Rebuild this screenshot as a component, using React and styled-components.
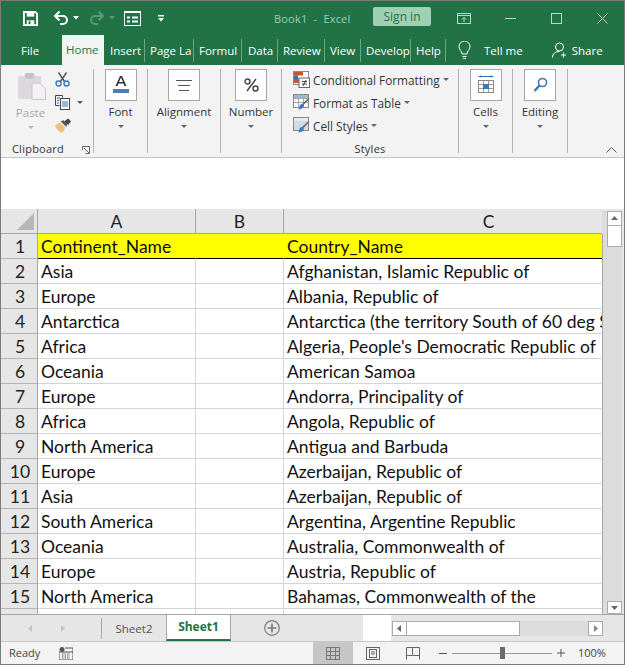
import React from "react";
import styled, { createGlobalStyle } from "styled-components";

const GlobalStyle = createGlobalStyle`
  html, body { margin: 0; padding: 0; background: #fff; }
  * { box-sizing: border-box; }
`;

const UI_FONT = `"Open Sans", "Noto Sans", "Liberation Sans", sans-serif`;
const CELL_FONT = `Lato, "Noto Sans", "Liberation Sans", sans-serif`;

const Window = styled.div`
  width: 625px;
  height: 665px;
  border: 1px solid #7b7b7b;
  overflow: hidden;
  display: flex;
  flex-direction: column;
  font-family: ${UI_FONT};
  background: #fff;
`;

/* title bar */
const TitleBar = styled.div`
  height: 34px;
  flex: none;
  background: #217346;
  display: flex;
  align-items: center;
  padding-left: 22px;
`;

const TitleIcon = styled.svg`
  flex: none;
  display: block;
  margin-left: ${(p) => p.$ml || 0}px;
`;

const BookTitle = styled.div`
  margin-left: 110px;
  width: 99px;
  font-size: 11px;
  letter-spacing: 0.2px;
  color: #9fcdb3;
  white-space: nowrap;
`;

const SignIn = styled.div`
  width: 58px;
  height: 19px;
  margin-bottom: 3px;
  background: #a0d0b4;
  border-radius: 2px;
  color: #217346;
  font-size: 12px;
  line-height: 19px;
  text-align: center;
`;

/* tabs */
const TabRow = styled.div`
  height: 30px;
  flex: none;
  background: #217346;
  display: flex;
  align-items: center;
  color: #fff;
  font-size: 11.5px;
`;

const Tab = styled.div`
  flex: none;
  width: ${(p) => p.$w}px;
  height: ${(p) => (p.$active ? 30 : 23)}px;
  line-height: ${(p) => (p.$active ? 30 : 23)}px;
  padding-left: ${(p) => p.$pad ?? 5}px;
  background: ${(p) => (p.$active ? "#f3f3f3" : "transparent")};
  color: ${(p) => (p.$active ? "#217346" : "#fff")};
  border-right: ${(p) => (p.$sep ? "1px solid #6ba585" : "none")};
  white-space: nowrap;
`;

const TabExtra = styled.div`
  display: flex;
  align-items: center;
  gap: ${(p) => p.$gap}px;
  margin-left: ${(p) => p.$ml}px;
  white-space: nowrap;
`;

/* ribbon */
const Ribbon = styled.div`
  height: 93px;
  flex: none;
  background: #f3f3f3;
  border-bottom: 1px solid #c6c6c6;
  display: flex;
  align-items: flex-start;
  padding-top: 4px;
  position: relative;
  font-size: 11.5px;
  color: #333;
`;

const Group = styled.div`
  flex: none;
  width: ${(p) => p.$w}px;
  height: 84px;
  border-right: 1px solid #b4b4b4;
  display: flex;
  flex-direction: column;
  align-items: center;
  position: relative;
`;

const BigBox = styled.div`
  width: 32px;
  height: 32px;
  flex: none;
  background: #fff;
  border: 1px solid #a6a6a6;
  display: flex;
  align-items: center;
  justify-content: center;
`;

const BigLabel = styled.div`
  margin-top: 2px;
  line-height: 17px;
  white-space: nowrap;
`;

const Caret = styled.div`
  width: 0;
  height: 0;
  border-left: 3px solid transparent;
  border-right: 3px solid transparent;
  border-top: 3px solid ${(p) => p.$color || "#666"};
  margin-top: ${(p) => p.$mt ?? 5}px;
  margin-left: ${(p) => p.$ml || 0}px;
  flex: none;
`;

const ClipboardBody = styled.div`
  display: flex;
  width: 100%;
  padding: 3px 0 0 17px;
  height: 70px;
`;

const PasteCol = styled.div`
  width: 25px;
  display: flex;
  flex-direction: column;
  align-items: center;
  color: #a8a8a8;
  svg { align-self: flex-start; margin-top: 1px; flex: none; }
`;

const PasteLabel = styled.div`
  margin-top: 4px;
  line-height: 17px;
`;

const ToolCol = styled.div`
  margin-left: 12px;
  display: flex;
  flex-direction: column;
  gap: 8px;
`;

const ToolRow = styled.div`
  display: flex;
  align-items: center;
  gap: 6px;
`;

const GroupLabel = styled.div`
  position: absolute;
  left: 0;
  right: ${(p) => p.$right || 0}px;
  bottom: -4px;
  height: 16px;
  line-height: 16px;
  font-size: 11px;
  letter-spacing: 0.25px;
  text-align: center;
`;

const Launcher = styled.svg`
  position: absolute;
  right: 3px;
  bottom: -1px;
`;

const StyleList = styled.div`
  display: flex;
  flex-direction: column;
  width: 100%;
  padding-left: 11px;
  margin-top: -1px;
`;

const StyleRow = styled.div`
  display: flex;
  align-items: center;
  height: 23px;
  white-space: nowrap;
  font-size: 11.8px;
  gap: 3px;
`;

const Collapse = styled.svg`
  position: absolute;
  right: 7px;
  bottom: 4px;
`;

const FormulaArea = styled.div`
  height: 51px;
  flex: none;
  background: #fff;
`;

/* sheet */
const SheetArea = styled.div`
  height: 405px;
  flex: none;
  display: flex;
  overflow: hidden;
  background: #e6e6e6;
`;

const Table = styled.div`
  width: 601px;
  flex: none;
  height: 405px;
  overflow: hidden;
  display: grid;
  grid-template-columns: 37px 158px 88px 410px;
  grid-auto-rows: 25px;
  font-family: ${CELL_FONT};
  font-size: 17.5px;
  color: #111;
`;

const Corner = styled.div`
  background: #e6e6e6;
  border-right: 1px solid #a6a6a6;
  border-bottom: 1px solid #a6a6a6;
  display: flex;
  align-items: flex-end;
  justify-content: flex-end;
  padding: 0 3px 3px 0;
`;

const ColHead = styled.div`
  background: #e6e6e6;
  border-right: 1px solid #a6a6a6;
  border-bottom: 1px solid #a6a6a6;
  text-align: center;
  line-height: 25px;
  color: #222;
`;

const RowHead = styled.div`
  background: #e6e6e6;
  border-right: 1px solid #a6a6a6;
  border-bottom: 1px solid #b4b4b4;
  text-align: center;
  padding-left: 2px;
  line-height: 26px;
  color: #222;
`;

const Cell = styled.div`
  padding-left: 3px;
  line-height: 26px;
  white-space: nowrap;
  overflow: hidden;
  background: ${(p) => (p.$head ? "#ffff00" : "#fff")};
  border-bottom: 1px solid ${(p) => (p.$head ? "#000" : "#d4d4d4")};
  border-right: 1px solid ${(p) => (p.$head ? "#ffff00" : "#d4d4d4")};
`;

const VScroll = styled.div`
  flex: 1;
  display: flex;
  flex-direction: column;
  align-items: center;
  padding: 2px 0 0 2px;
  position: relative;
  background:
    linear-gradient(#e6e6e6, #e6e6e6) top / 100% 2px no-repeat,
    linear-gradient(#e6e6e6, #e6e6e6) right / 2px 100% no-repeat,
    #dcdcdc;
  &::before {
    content: "";
    position: absolute;
    left: 0;
    top: 25px;
    bottom: 0;
    width: 1px;
    background: #a6a6a6;
  }
`;

const ScrollBtn = styled.div`
  width: 15px;
  height: ${(p) => p.$h || 15}px;
  flex: none;
  background: #fff;
  border: 1px solid #ababab;
  display: flex;
  align-items: center;
  justify-content: center;
  margin-top: ${(p) => (p.$push ? "auto" : "0")};
`;

const VThumb = styled.div`
  width: 15px;
  height: 21px;
  background: #fff;
  border: 1px solid #ababab;
  border-top: none;
`;

/* sheet tabs */
const TabBar = styled.div`
  height: 28px;
  flex: none;
  background: #e6e6e6;
  border-top: 1px solid #a6a6a6;
  border-bottom: 1px solid #c6c6c6;
  display: flex;
  font-size: 11.5px;
`;

const NavBox = styled.div`
  width: 100px;
  height: 100%;
  display: flex;
  align-items: center;
  gap: 23px;
  padding-left: 25px;
`;

const SheetTab = styled.div`
  flex: none;
  width: ${(p) => p.$w}px;
  text-align: center;
  border-left: 1px solid #a6a6a6;
  ${(p) =>
    p.$active
      ? `
    height: 100%;
    line-height: 24px;
    background: #fff;
    color: #217346;
    font-weight: 700;
    font-size: 12px;
    border-right: 1px solid #a6a6a6;
    border-bottom: 2px solid #217346;
  `
      : `
    height: 21px;
    margin-top: 3px;
    line-height: 22px;
    color: #555;
  `}
`;

const AddSheet = styled.div`
  width: 132px;
  display: flex;
  align-items: center;
  padding-left: 33px;
`;

const WhiteGap = styled.div`
  width: 28px;
  background: #fff;
`;

const HScroll = styled.div`
  flex: none;
  width: 211px;
  height: 15px;
  margin: 6px 0 0 1px;
  display: flex;
  background: #dcdcdc;
`;

const HBtn = styled.div`
  width: 15px;
  height: 15px;
  flex: none;
  background: #fff;
  border: 1px solid #ababab;
  display: flex;
  align-items: center;
  justify-content: center;
  margin-left: ${(p) => (p.$push ? "auto" : "0")};
`;

const HThumb = styled.div`
  width: 113px;
  height: 15px;
  background: #fff;
  border: 1px solid #ababab;
  border-left: none;
`;

/* status bar */
const StatusBar = styled.div`
  flex: 1;
  background: #f3f3f3;
  display: flex;
  align-items: center;
  font-size: 11px;
  color: #444;
`;

const Ready = styled.div`
  width: 58px;
  padding-left: 8px;
  margin-top: -1px;
`;

const ViewBtn = styled.div`
  flex: none;
  width: ${(p) => p.$w}px;
  height: 100%;
  margin-left: ${(p) => p.$ml || 0}px;
  background: ${(p) => (p.$on ? "#c6c6c6" : "transparent")};
  display: flex;
  align-items: center;
  justify-content: center;
`;

const Slider = styled.div`
  flex: none;
  width: 100px;
  height: 1px;
  margin-left: 5px;
  background: #9a9a9a;
  position: relative;
`;

const SliderThumb = styled.div`
  position: absolute;
  left: 48px;
  top: -6px;
  width: 5px;
  height: 12px;
  background: #6a6a6a;
`;

const Zoom = styled.div`
  margin-left: 13px;
  margin-top: -1px;
`;

const ROWS = [
  ["Continent_Name", "Country_Name"],
  ["Asia", "Afghanistan, Islamic Republic of"],
  ["Europe", "Albania, Republic of"],
  ["Antarctica", "Antarctica (the territory South of 60 deg S)"],
  ["Africa", "Algeria, People's Democratic Republic of"],
  ["Oceania", "American Samoa"],
  ["Europe", "Andorra, Principality of"],
  ["Africa", "Angola, Republic of"],
  ["North America", "Antigua and Barbuda"],
  ["Europe", "Azerbaijan, Republic of"],
  ["Asia", "Azerbaijan, Republic of"],
  ["South America", "Argentina, Argentine Republic"],
  ["Oceania", "Australia, Commonwealth of"],
  ["Europe", "Austria, Republic of"],
  ["North America", "Bahamas, Commonwealth of the"],
  ["", ""],
];

const TABS = [
  { name: "File", w: 61, pad: 20 },
  { name: "Home", w: 42, pad: 4, active: true },
  { name: "Insert", w: 41, pad: 6, sep: true },
  { name: "Page La", w: 49, sep: true },
  { name: "Formul", w: 48, sep: true },
  { name: "Data", w: 36, pad: 6, sep: true },
  { name: "Review", w: 47, sep: true },
  { name: "View", w: 36, sep: true },
  { name: "Develop", w: 50, sep: true },
  { name: "Help", w: 35, sep: true },
];

const Arrow = ({ dir, color = "#666" }) => {
  const pts = {
    up: "1,6 4.5,2 8,6",
    down: "1,3 4.5,7 8,3",
    left: "6,1 2,4.5 6,8",
    right: "3,1 7,4.5 3,8",
  };
  return (
    <svg width="9" height="9" viewBox="0 0 9 9">
      <polygon points={pts[dir]} fill={color} />
    </svg>
  );
};

const CondIcon = () => (
  <svg width="17" height="17" viewBox="0 0 17 17">
    <rect x="0.5" y="0.5" width="15" height="13" fill="#fff" stroke="#8a8a8a" />
    <rect x="1" y="1" width="9" height="3.5" fill="#d2502b" />
    <rect x="1" y="8" width="6" height="4" fill="#d2502b" />
    <rect x="1" y="4.5" width="4" height="3.5" fill="#2f6fb5" />
    <rect x="6" y="7" width="10.5" height="9.5" fill="#fff" stroke="#666" />
    <path d="M9 10.5h5M9 13h5M10 15l3-6" stroke="#333" strokeWidth="0.9" fill="none" />
  </svg>
);

const TableIcon = ({ shaded }) => (
  <svg width="17" height="17" viewBox="0 0 17 17">
    <rect x="0.5" y="0.5" width="15" height="13" fill={shaded ? "#cfdbe8" : "#fff"} stroke="#8a8a8a" />
    {!shaded && (
      <path d="M0.5 4.5h15M0.5 8.5h15M5.5 .5v13M10.5 .5v13" stroke="#9aa7b5" strokeWidth="1" />
    )}
    <rect x="1" y="1" width="14" height="3" fill={shaded ? "#e8e8e8" : "#a8b4c2"} />
    <path d="M15.5 4l1 1-6 6-1.500-1z" fill="#666" />
    <path d="M9.500 10c1.500.5 1.500 1.500 1 3-1 1.500-3 2.500-5.500 2.500 1.500-1 1-3 2-4.500.500-.7 1.500-1 2.500-1z" fill="#3a78b8" />
  </svg>
);

export default function App() {
  return (
    <Window>
      <GlobalStyle />
      <TitleBar>
        <TitleIcon width="15" height="15" viewBox="0 0 16 16" fill="none">
          <path d="M1 1h12l2 2v12H1z" stroke="#fff" strokeWidth="2" />
          <rect x="4" y="1" width="8" height="5" fill="#fff" />
          <rect x="4" y="10" width="8" height="5" fill="#fff" />
          <rect x="6" y="11" width="2" height="3" fill="#217346" />
        </TitleIcon>
        <TitleIcon $ml={15} width="16" height="16" viewBox="0 0 16 16" fill="none">
          <path d="M3 6h7a4 4 0 0 1 0 8H7" stroke="#fff" strokeWidth="2" />
          <path d="M6.500 1.500L2 6l4.500 4.500" stroke="#fff" strokeWidth="2" />
        </TitleIcon>
        <TitleIcon $ml={4} width="6" height="4" viewBox="0 0 6 4">
          <polygon points="0,0 6,0 3,3.500" fill="#fff" />
        </TitleIcon>
        <TitleIcon $ml={10} width="16" height="16" viewBox="0 0 16 16" fill="none">
          <path d="M13 6H6a4 4 0 0 0 0 8h3" stroke="#5d9a78" strokeWidth="2" />
          <path d="M9.500 1.500L14 6l-4.500 4.500" stroke="#5d9a78" strokeWidth="2" />
        </TitleIcon>
        <TitleIcon $ml={4} width="6" height="4" viewBox="0 0 6 4">
          <polygon points="0,0 6,0 3,3.500" fill="#5d9a78" />
        </TitleIcon>
        <TitleIcon $ml={9} width="17" height="15" viewBox="0 0 17 15" fill="none">
          <rect x="0.500" y="0.500" width="16" height="14" stroke="#fff" />
          <rect x="0" y="0" width="17" height="2" fill="#fff" />
          <path d="M3 6.500h3M8 6.500h6M3 10.500h3M8 10.500h6" stroke="#fff" strokeWidth="2" />
        </TitleIcon>
        <TitleIcon $ml={17} width="6" height="7" viewBox="0 0 6 7">
          <rect x="0" y="0" width="6" height="1.500" fill="#fff" />
          <polygon points="0,3 6,3 3,6.500" fill="#fff" />
        </TitleIcon>
        <BookTitle>Book1&nbsp; -&nbsp; Excel</BookTitle>
        <SignIn>Sign in</SignIn>
        <TitleIcon $ml={26} width="14" height="11" viewBox="0 0 14 11" fill="none">
          <rect x="0.500" y="0.500" width="13" height="10" stroke="#b9dac7" />
          <path d="M0.500 2.500h13M7 9V4.500M5 6.500l2-2 2 2" stroke="#b9dac7" />
        </TitleIcon>
        <TitleIcon $ml={34} width="11" height="3" viewBox="0 0 11 3">
          <rect y="1" width="11" height="1" fill="#b9dac7" />
        </TitleIcon>
        <TitleIcon $ml={35} width="11" height="11" viewBox="0 0 11 11" fill="none">
          <rect x="0.500" y="0.500" width="10" height="10" stroke="#b9dac7" />
        </TitleIcon>
        <TitleIcon $ml={35} width="11" height="11" viewBox="0 0 11 11" fill="none">
          <path d="M0.500 0.500l10 10M10.500 0.500l-10 10" stroke="#b9dac7" />
        </TitleIcon>
      </TitleBar>

      <TabRow>
        {TABS.map((t) => (
          <Tab key={t.name} $w={t.w} $pad={t.pad} $active={t.active} $sep={t.sep}>
            {t.name}
          </Tab>
        ))}
        <TabExtra $gap={13} $ml={12}>
          <svg width="13" height="19" viewBox="0 0 13 19" fill="none" stroke="#fff">
            <path d="M4 13c0-3-3-4-3-7.500a5.500 5.500 0 0 1 11 0C12 9 9 10 9 13z" />
            <path d="M4.500 15.500h4M5 17.500h3" />
          </svg>
          <span>Tell me</span>
        </TabExtra>
        <TabExtra $gap={5} $ml={29}>
          <svg width="15" height="16" viewBox="0 0 15 16" fill="none" stroke="#fff">
            <circle cx="7.500" cy="5" r="4" />
            <path d="M0.500 15.500c0-4 3-6 7-6M11.500 10.500v5M9 13h5" />
          </svg>
          <span>Share</span>
        </TabExtra>
      </TabRow>

      <Ribbon>
        <Group $w={93}>
          <ClipboardBody>
            <PasteCol>
              <svg width="28" height="27" viewBox="0 0 29 28">
                <rect x="0" y="3" width="24" height="24" rx="1" fill="#dcd8dc" />
                <rect x="7" y="0" width="10" height="6" rx="2" fill="#c6c2c6" />
                <path d="M14.500 10.500h8l6 6v11h-14z" fill="#f3f1f5" stroke="#c6c2c6" />
              </svg>
              <PasteLabel>Paste</PasteLabel>
              <Caret $color="#b4b4b4" $mt={5} />
            </PasteCol>
            <ToolCol>
              <ToolRow>
                <svg width="15" height="15" viewBox="0 0 15 15" fill="none">
                  <path d="M3.500 0.500l6 9M11.500 0.500l-6 9" stroke="#555" strokeWidth="1.400" />
                  <circle cx="3.500" cy="11.500" r="2.500" stroke="#3a78b8" strokeWidth="1.400" />
                  <circle cx="11.500" cy="11.500" r="2.500" stroke="#3a78b8" strokeWidth="1.400" />
                </svg>
              </ToolRow>
              <ToolRow>
                <svg width="15" height="15" viewBox="0 0 15 15" fill="none">
                  <path d="M.500.500h7v2M.500.500v10h4" stroke="#444" />
                  <rect x="5.500" y="3.500" width="9" height="11" fill="#fff" stroke="#444" />
                  <path d="M2 3h3M2 5.500h2M2 8h2" stroke="#2f6fb5" />
                  <path d="M7 7h6M7 9h6M7 11h6" stroke="#2f6fb5" />
                </svg>
                <Caret $mt={0} $color="#555" $ml={1} />
              </ToolRow>
              <ToolRow>
                <svg width="16" height="15" viewBox="0 0 17 15">
                  <path d="M0 8l5-4 6 6-3 5c-3 0-6-3-8-7z" fill="#ecc27a" />
                  <path d="M6 3l3-1 4 4-1 3z" fill="#555" />
                  <path d="M10 3l4-3 3 3-3 4z" fill="#444" />
                </svg>
              </ToolRow>
            </ToolCol>
          </ClipboardBody>
          <GroupLabel $right={18}>Clipboard</GroupLabel>
          <Launcher width="8" height="8" viewBox="0 0 8 8" fill="none" stroke="#666">
            <path d="M.500 4V.500H7.500V4M2 2l5 5M7.500 3.500v4h-4" />
          </Launcher>
        </Group>

        <Group $w={54}>
          <BigBox>
            <svg width="18" height="20" viewBox="0 0 18 20">
              <path d="M3.500 11L8 1h2l4.500 10h-2l-1-2.500h-5L5.500 11zM7 7h4L9 2.500z" fill="#333" />
              <rect x="1" y="14" width="16" height="4" fill="#4a7eb6" />
            </svg>
          </BigBox>
          <BigLabel>Font</BigLabel>
          <Caret />
        </Group>

        <Group $w={73}>
          <BigBox>
            <svg width="16" height="11" viewBox="0 0 16 11" stroke="#555">
              <path d="M0 .500h16M2 5.500h12M3 10.500h10" />
            </svg>
          </BigBox>
          <BigLabel>Alignment</BigLabel>
          <Caret />
        </Group>

        <Group $w={61}>
          <BigBox>
            <svg width="15" height="14" viewBox="0 0 15 14" fill="none" stroke="#444" strokeWidth="1.400">
              <circle cx="3.500" cy="3.500" r="2.500" />
              <circle cx="11.500" cy="10.500" r="2.500" />
              <path d="M12 1L3 13" />
            </svg>
          </BigBox>
          <BigLabel>Number</BigLabel>
          <Caret />
        </Group>

        <Group $w={177}>
          <StyleList>
            <StyleRow>
              <CondIcon />
              Conditional Formatting
              <Caret $mt={0} />
            </StyleRow>
            <StyleRow>
              <TableIcon />
              Format as Table
              <Caret $mt={0} />
            </StyleRow>
            <StyleRow>
              <TableIcon shaded />
              Cell Styles
              <Caret $mt={0} />
            </StyleRow>
          </StyleList>
          <GroupLabel>Styles</GroupLabel>
        </Group>

        <Group $w={54}>
          <BigBox>
            <svg width="16" height="20" viewBox="0 0 16 20" fill="none">
              <path d="M.500 1.500h15M3 .500v2M13 .500v2" stroke="#2f6fb5" />
              <rect x=".500" y="5.500" width="15" height="12" stroke="#888" />
              <path d="M.500 9.500h15M.500 13.500h15M5.500 5.500v12M10.500 5.500v12" stroke="#999" />
              <rect x="5" y="9" width="6" height="5" fill="#3d78b8" />
            </svg>
          </BigBox>
          <BigLabel>Cells</BigLabel>
          <Caret />
        </Group>

        <Group $w={55}>
          <BigBox>
            <svg width="15" height="16" viewBox="0 0 15 16" fill="none" stroke="#3d78b8">
              <circle cx="9.500" cy="5.500" r="4" strokeWidth="1.600" />
              <path d="M6.500 8.500L1.500 14" strokeWidth="2.600" />
            </svg>
          </BigBox>
          <BigLabel>Editing</BigLabel>
          <Caret />
        </Group>

        <Collapse width="11" height="6" viewBox="0 0 11 6" fill="none" stroke="#555">
          <path d="M.500 5.500l5-5 5 5" />
        </Collapse>
      </Ribbon>

      <FormulaArea />

      <SheetArea>
        <Table>
          <Corner>
            <svg width="17" height="17" viewBox="0 0 17 17">
              <polygon points="17,0 17,17 0,17" fill="#b7b7b7" />
            </svg>
          </Corner>
          <ColHead>A</ColHead>
          <ColHead>B</ColHead>
          <ColHead>C</ColHead>
          {ROWS.map((row, i) => (
            <React.Fragment key={i}>
              <RowHead>{i < 15 ? i + 1 : ""}</RowHead>
              <Cell $head={i === 0}>{row[0]}</Cell>
              <Cell $head={i === 0} />
              <Cell $head={i === 0}>{row[1]}</Cell>
            </React.Fragment>
          ))}
        </Table>
        <VScroll>
          <ScrollBtn>
            <Arrow dir="up" />
          </ScrollBtn>
          <VThumb />
          <ScrollBtn $push $h={13}>
            <Arrow dir="down" />
          </ScrollBtn>
        </VScroll>
      </SheetArea>

      <TabBar>
        <NavBox>
          <Arrow dir="left" color="#c4c4c4" />
          <Arrow dir="right" color="#c4c4c4" />
        </NavBox>
        <SheetTab $w={65}>Sheet2</SheetTab>
        <SheetTab $w={65} $active>
          Sheet1
        </SheetTab>
        <AddSheet>
          <svg width="16" height="16" viewBox="0 0 16 16" fill="none" stroke="#777">
            <circle cx="8" cy="8" r="7.300" strokeWidth="1.200" />
            <path d="M8 3.500v9M3.500 8h9" strokeWidth="1.600" />
          </svg>
        </AddSheet>
        <WhiteGap />
        <HScroll>
          <HBtn>
            <Arrow dir="left" />
          </HBtn>
          <HThumb />
          <HBtn $push>
            <Arrow dir="right" color="#888" />
          </HBtn>
        </HScroll>
      </TabBar>

      <StatusBar>
        <Ready>Ready</Ready>
        <svg width="14" height="13" viewBox="0 0 14 13">
          <circle cx="3" cy="2.500" r="2.500" fill="#555" />
          <path d="M6 1h8v12H0V5h14" fill="none" stroke="#555" />
          <path d="M3 7h8M3 9h8M3 11h8" stroke="#555" strokeDasharray="1.500 1" />
        </svg>
        <ViewBtn $w={40} $ml={240} $on>
          <svg width="14" height="13" viewBox="0 0 14 13" fill="none" stroke="#777">
            <rect x=".500" y=".500" width="13" height="12" />
            <path d="M.500 4.500h13M.500 8.500h13M4.500 .500v12M9.500 .500v12" />
          </svg>
        </ViewBtn>
        <ViewBtn $w={14} $ml={13}>
          <svg width="14" height="13" viewBox="0 0 14 13" fill="none" stroke="#666">
            <rect x=".500" y=".500" width="13" height="12" />
            <rect x="3.500" y="2.500" width="7" height="8" />
            <path d="M5 5h4M5 7h4" />
          </svg>
        </ViewBtn>
        <ViewBtn $w={14} $ml={26}>
          <svg width="14" height="13" viewBox="0 0 14 13" fill="none" stroke="#666">
            <path d="M.500 12.500V.500h13v12M.500 8.500h6V.500M13.500 8.500H7" />
          </svg>
        </ViewBtn>
        <ViewBtn $w={8} $ml={19}>
          <svg width="8" height="1" viewBox="0 0 8 1">
            <rect width="8" height="1" fill="#555" />
          </svg>
        </ViewBtn>
        <Slider>
          <SliderThumb />
        </Slider>
        <ViewBtn $w={8} $ml={5}>
          <svg width="8" height="8" viewBox="0 0 8 8" stroke="#555">
            <path d="M0 4h8M4 0v8" />
          </svg>
        </ViewBtn>
        <Zoom>100%</Zoom>
      </StatusBar>
    </Window>
  );
}
